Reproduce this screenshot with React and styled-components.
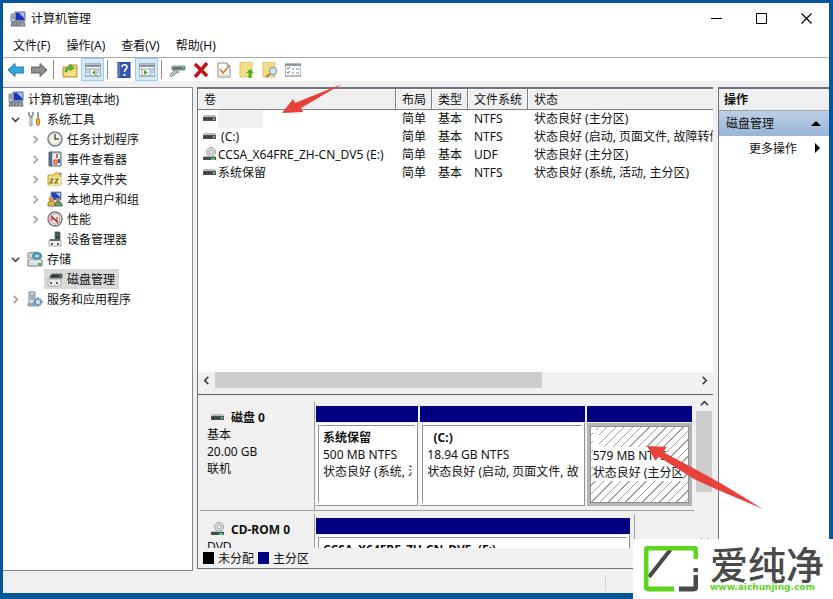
import React from 'react';
import styled, { createGlobalStyle, css } from 'styled-components';

const TREE = [
  { label: '计算机管理(本地)', icon: 'computer', level: 0 },
  { label: '系统工具', icon: 'tools', level: 1, state: 'open' },
  { label: '任务计划程序', icon: 'clock', level: 2, state: 'closed' },
  { label: '事件查看器', icon: 'events', level: 2, state: 'closed' },
  { label: '共享文件夹', icon: 'shared', level: 2, state: 'closed' },
  { label: '本地用户和组', icon: 'users', level: 2, state: 'closed' },
  { label: '性能', icon: 'performance', level: 2, state: 'closed' },
  { label: '设备管理器', icon: 'devices', level: 2 },
  { label: '存储', icon: 'storage', level: 1, state: 'open' },
  { label: '磁盘管理', icon: 'disks', level: 2, selected: true },
  { label: '服务和应用程序', icon: 'services', level: 1, state: 'closed' },
];

const MENUS = ['文件(F)', '操作(A)', '查看(V)', '帮助(H)'];

const TOOLS = [
  ['back', '后退'],
  ['forward', '前进'],
  null,
  ['folderUp', '上一级'],
  ['paneLeft', '显示/隐藏控制台树', true],
  null,
  ['help', '帮助'],
  ['paneRight', '显示/隐藏操作窗格', true],
  null,
  ['connect', '连接'],
  ['remove', '删除'],
  ['check', '属性'],
  ['upload', '打开'],
  ['search', '浏览'],
  ['options', '设置'],
];

const VOLUMES = [
  { name: '', icon: 'drive', fs: 'NTFS', status: '状态良好 (主分区)', masked: true },
  { name: ' (C:)', icon: 'drive', fs: 'NTFS', status: '状态良好 (启动, 页面文件, 故障转储, 主分区)' },
  { name: 'CCSA_X64FRE_ZH-CN_DV5 (E:)', icon: 'disc', fs: 'UDF', status: '状态良好 (主分区)' },
  { name: '系统保留', icon: 'drive', fs: 'NTFS', status: '状态良好 (系统, 活动, 主分区)' },
];

const DISKS = [
  {
    name: '磁盘 0',
    icon: 'drive',
    lines: ['基本', '20.00 GB', '联机'],
    parts: [
      { name: '系统保留', size: '500 MB NTFS', status: '状态良好 (系统, 活动, 主分区)', grow: 102 },
      { name: '  (C:)', size: '18.94 GB NTFS', status: '状态良好 (启动, 页面文件, 故障转储)', grow: 164 },
      { name: '  ', size: '579 MB NTFS', status: '状态良好 (主分区', grow: 105, selected: true },
    ],
  },
  {
    name: 'CD-ROM 0',
    icon: 'disc',
    short: true,
    lines: ['DVD'],
    parts: [{ name: 'CCSA_X64FRE_ZH-CN_DV5  (E:)', grow: 1 }],
  },
];

const DRAWINGS = {
  computer: (
    <>
      <path d="M5 1h10v9H5z" fill="#9aa7c4" stroke="#66708c" />
      <path d="M6 2h8v7H6z" fill="#1d35b8" />
      <path d="M9 2h5v5z" fill="#a9c2f7" />
      <path d="M1 3h4v8H1z" fill="#c9ced8" stroke="#7d8494" />
      <path d="M2 5h2M2 7h2" stroke="#4a5a7c" />
      <path d="M2 11h12l1 4H1z" fill="#a9aebb" stroke="#596274" />
      <path d="M3 13h9" stroke="#414b62" strokeDasharray="2 1" />
    </>
  ),
  tools: (
    <>
      <path d="M4 6v9" stroke="#8c9298" strokeWidth="3" />
      <path d="M4 6v8" stroke="#e7e9eb" />
      <path d="M2 1v3l2 2 2-2V1" fill="none" stroke="#858b91" strokeWidth="1.6" />
      <path d="M11 1v7" stroke="#7c858e" strokeWidth="1.6" />
      <path d="M9.5 8h3v5l-1.5 2-1.5-2z" fill="#f4b13a" stroke="#c07c16" />
    </>
  ),
  clock: (
    <>
      <circle cx="8" cy="8" r="7" fill="#dfe4e8" stroke="#7e868d" strokeWidth="1.6" />
      <circle cx="8" cy="8" r="5" fill="#f7f3df" />
      <path d="M8 3v5h4" fill="none" stroke="#47525c" strokeWidth="1.4" />
    </>
  ),
  events: (
    <>
      <path d="M2 1h12v14H2z" fill="#b9c6dc" stroke="#5a6d92" />
      <path d="M2 1h3v14H2z" fill="#54688f" />
      <path d="M6 3h7v11H6z" fill="#f5f0dc" />
      <path d="M10 3v4" stroke="#d63030" strokeWidth="1.5" />
      <path d="M7 9h3v4H7z" fill="#f3c546" stroke="#d63030" />
      <path d="M11 8h2v4h-2z" fill="#3156b8" />
    </>
  ),
  shared: (
    <>
      <path d="M1 4h6l1-2h6v12H1z" fill="#f3d36b" stroke="#c59c32" />
      <path d="M2 6h12v8H2z" fill="#fae79d" />
      <path d="M3 8h3l-3 4h3M8 8h3l-3 4h3" fill="none" stroke="#63712e" strokeWidth="1.2" />
      <path d="M12 2h2v2h-2z" fill="#5aa1d8" />
    </>
  ),
  users: (
    <>
      <path d="M4 1h10v8H4z" fill="#2444b8" stroke="#8793ae" />
      <path d="M9 2h4v4z" fill="#b6c9f7" />
      <circle cx="4" cy="8" r="2.5" fill="#d99b58" />
      <path d="M1 15v-3l2-2h3l2 2v3z" fill="#e2bd3f" stroke="#9b7b24" />
      <circle cx="11" cy="9" r="2.2" fill="#c48657" />
      <path d="M8 15v-3l2-1h3l2 2v2z" fill="#6b9f72" stroke="#466f52" />
    </>
  ),
  performance: (
    <>
      <circle cx="8" cy="8" r="7" fill="#f8f3f1" stroke="#74777b" strokeWidth="1.4" />
      <circle cx="8" cy="8" r="5" fill="#fff" stroke="#d08a83" />
      <path d="M5 10V6l5 5V6" fill="none" stroke="#b52520" strokeWidth="1.2" />
      <path d="M4 4l8 8" stroke="#c33b35" />
    </>
  ),
  devices: (
    <>
      <path d="M8 1h5v8H8z" fill="#39413f" stroke="#737b79" />
      <path d="M10 3h1v2h-1z" fill="#52c772" />
      <path d="M2 9h12v6H2z" fill="#eceeef" stroke="#a1a5a8" />
      <path d="M3 8h10v2H3z" fill="#636b6d" />
      <path d="M5 12v2M11 12v2" stroke="#333" strokeWidth="1.5" />
    </>
  ),
  storage: (
    <>
      <path d="M1 2l9-1 4 2v4H1z" fill="#d3dade" stroke="#7d888f" />
      <ellipse cx="10" cy="5" rx="4.5" ry="3" fill="#4da9c7" stroke="#397e9b" />
      <ellipse cx="10" cy="5" rx="1.5" ry="1" fill="#fff" />
      <path d="M1 9h14v6H1z" fill="#dce1e3" stroke="#707b80" />
      <path d="M2 10h12" stroke="#fff" />
      <path d="M11 13h3" stroke="#35af4a" strokeWidth="2" />
    </>
  ),
  disks: (
    <>
      <path d="M1 8h13v7H1z" fill="#e9eaea" stroke="#abaeae" />
      <path d="M3 5l2-2h10v4H3z" fill="#333a39" stroke="#737b79" />
      <path d="M12 5h2" stroke="#62c776" />
      <path d="M4 11v2M10 11v2" stroke="#353535" strokeWidth="1.5" />
    </>
  ),
  services: (
    <>
      <path d="M2 1h6v12H2z" fill="#d8e0e6" stroke="#768a98" />
      <path d="M3 4h4M3 6h4M3 8h4" stroke="#688397" />
      <path d="M1 13h8v2H1z" fill="#aebfca" stroke="#7c8f9b" />
      <circle cx="11" cy="11" r="3" fill="#cfe1ef" stroke="#6c96b5" strokeWidth="1.6" />
      <path d="M11 6v2M11 14v2M6 11h2M14 11h2M8 8l1 1M13 13l1 1M14 8l-1 1M8 14l1-1" stroke="#6c96b5" strokeWidth="1.6" />
    </>
  ),
  drive: (
    <>
      <path d="M3 4h11l1 2H2z" fill="#b8bcbb" />
      <path d="M2 6h13v4H2z" fill="#4b5351" />
      <path d="M3 8h7" stroke="#252b29" strokeDasharray="3 1" />
      <path d="M12 8h2" stroke="#4acb6c" strokeWidth="2" />
    </>
  ),
  disc: (
    <>
      <circle cx="10" cy="5" r="4.5" fill="#dcddde" stroke="#a0a3a5" />
      <circle cx="10" cy="5" r="2" fill="#f8f8f8" stroke="#9da0a2" />
      <path d="M3 9h11l1 1H2z" fill="#b6bab8" />
      <path d="M2 10h13v3H2z" fill="#46504b" />
      <path d="M10 12h4" stroke="#4acb6c" strokeWidth="2" />
    </>
  ),
  back: <path d="M0 8l7-6.5V5h9v6H7v3.5z" fill="#32a7df" stroke="#287ca9" />,
  forward: <path d="M16 8L9 1.5V5H0v6h9v3.5z" fill="#8b8f92" stroke="#5f6366" />,
  folderUp: (
    <>
      <path d="M1 5h5l1-2h8v12H1z" fill="#edcf68" stroke="#b99132" />
      <path d="M2 8h12v6H2z" fill="#f7dc86" />
      <path d="M3 10c0-4 2-5 5-5V2l4 4-4 3V7C6 7 5 8 5 10z" fill="#52b43b" stroke="#32892a" strokeWidth=".5" />
    </>
  ),
  paneLeft: (
    <>
      <path d="M0 2h16v12H0z" fill="#fff" stroke="#747f89" />
      <path d="M0 4h16" stroke="#8795a2" strokeWidth="2" />
      <path d="M0 7h16M5 7v7M11 7v7" stroke="#8b98a4" />
      <path d="M1 9h3M1 11h3M12 9h3M12 11h3" stroke="#7ba4c4" />
      <path d="M10 8v5l-3-2.5z" fill="#48a52e" />
    </>
  ),
  paneRight: (
    <>
      <path d="M0 2h16v12H0z" fill="#fff" stroke="#747f89" />
      <path d="M0 4h16" stroke="#8795a2" strokeWidth="2" />
      <path d="M0 7h16M3 7v7M11 7v7" stroke="#8b98a4" />
      <path d="M12 9h3M12 11h3" stroke="#7ba4c4" />
      <path d="M5 8v5l4-2.5z" fill="#48a52e" />
    </>
  ),
  help: (
    <>
      <path d="M2 0h12v16H2z" fill="#3459b7" stroke="#213f8d" />
      <path d="M3 1v14" stroke="#8095cf" />
      <path d="M6 5c0-3 5-3 5 0 0 2-2.5 2-2.5 5" fill="none" stroke="#fff" strokeWidth="1.6" />
      <path d="M7.5 12h2v2h-2z" fill="#fff" />
    </>
  ),
  connect: (
    <>
      <path d="M2 4h13v4H2z" fill="#65716f" stroke="#8b9492" />
      <path d="M2 4h13" stroke="#c1c9c8" />
      <path d="M12 6h2" stroke="#45c75a" strokeWidth="2" />
      <path d="M0 13l5-5 4 2-3 1-5 4z" fill="#b7c8d5" stroke="#708b9e" />
    </>
  ),
  remove: <path d="M2 2l12 12M14 1L2 15" stroke="#bf161b" strokeWidth="3.5" />,
  check: (
    <>
      <path d="M2 1h9l3 3v11H2z" fill="#fff" stroke="#8c8c8c" />
      <path d="M11 1v3h3" fill="none" stroke="#a8a8a8" />
      <path d="M4 7l3 4 6-7" fill="none" stroke="#d5713b" strokeWidth="1.5" />
      <path d="M4 13h8" stroke="#bbb" strokeDasharray="2 1" />
    </>
  ),
  upload: (
    <>
      <path d="M1 0h12v15H1z" fill="#f5dd85" stroke="#dbc36e" />
      <path d="M11 7l4 4h-2.5v5h-3v-5H7z" fill="#4dae30" />
    </>
  ),
  search: (
    <>
      <path d="M1 0h12v15H1z" fill="#f5dd85" stroke="#dbc36e" />
      <circle cx="11" cy="9" r="3.5" fill="#d7eaf4" stroke="#8fa3b3" strokeWidth="1.4" />
      <path d="M8 12l-4 3" stroke="#a37a43" strokeWidth="2" />
    </>
  ),
  options: (
    <>
      <path d="M0 2h16v12H0z" fill="#fff" stroke="#707983" />
      <path d="M0 3h16" stroke="#8d98a4" strokeWidth="2" />
      <path d="M2 6l1 1 2-2M2 10l1 1 2-2" fill="none" stroke="#3575bd" />
      <path d="M7 7h2M7 11h2M11 7h3M11 11h3" stroke="#7c8791" />
    </>
  ),
};

function Icon({ name }) {
  return (
    <IconSvg viewBox="0 0 16 16" aria-hidden="true">
      {DRAWINGS[name]}
    </IconSvg>
  );
}

function Chevron({ dir }) {
  const points = {
    down: '1,3 5,7 9,3',
    up: '1,7 5,3 9,7',
    left: '7,1 3,5 7,9',
    right: '3,1 7,5 3,9',
  };
  return (
    <ChevronSvg viewBox="0 0 10 10" aria-hidden="true">
      <polyline points={points[dir]} fill="none" stroke="currentColor" strokeWidth="1.8" />
    </ChevronSvg>
  );
}

function ConsoleTree() {
  return (
    <Tree aria-label="控制台树">
      {TREE.map(item => (
        <TreeRow key={item.label} $level={item.level}>
          {item.level > 0 && (
            <Toggle $open={item.state === 'open'} disabled={!item.state} aria-label={item.label}>
              {item.state && <Chevron dir={item.state === 'open' ? 'down' : 'right'} />}
            </Toggle>
          )}
          <TreeItem href="#" $selected={item.selected}>
            <Icon name={item.icon} />
            {item.label}
          </TreeItem>
        </TreeRow>
      ))}
    </Tree>
  );
}

function VolumeList() {
  return (
    <ListPane>
      <TableArea>
        <Table>
          <colgroup>
            <Col $width={198} />
            <Col $width={36} />
            <Col $width={36} />
            <Col $width={60} />
            <col />
          </colgroup>
          <thead>
            <tr>
              <Th>卷</Th>
              <Th>布局</Th>
              <Th>类型</Th>
              <Th>文件系统</Th>
              <Th>状态</Th>
            </tr>
          </thead>
          <tbody>
            {VOLUMES.map(v => (
              <tr key={v.name}>
                <Td $first>
                  <VolumeName>
                    <Icon name={v.icon} />
                    {v.masked ? <Mask /> : v.name}
                  </VolumeName>
                </Td>
                <Td>简单</Td>
                <Td>基本</Td>
                <Td>{v.fs}</Td>
                <Td>{v.status}</Td>
              </tr>
            ))}
          </tbody>
        </Table>
      </TableArea>
      <ScrollBar>
        <ScrollBtn aria-label="向左滚动">
          <Chevron dir="left" />
        </ScrollBtn>
        <Track>
          <Thumb />
        </Track>
        <ScrollBtn aria-label="向右滚动">
          <Chevron dir="right" />
        </ScrollBtn>
      </ScrollBar>
    </ListPane>
  );
}

function DiskView() {
  return (
    <DiskPane>
      <DiskRows>
        {DISKS.map(disk => (
          <Disk key={disk.name}>
            <DiskLabel>
              <DiskTitle>
                <Icon name={disk.icon} />
                {disk.name}
              </DiskTitle>
              {disk.lines.map(line => (
                <div key={line}>{line}</div>
              ))}
            </DiskLabel>
            <Parts $short={disk.short}>
              {disk.parts.map(part => (
                <Part key={part.name} $grow={part.grow}>
                  <PartBar />
                  <PartBody $selected={part.selected}>
                    <PartInner $selected={part.selected}>
                      <PartLine $bold>{part.name}</PartLine>
                      {part.size && <PartLine>{part.size}</PartLine>}
                      {part.status && <PartLine>{part.status}</PartLine>}
                    </PartInner>
                  </PartBody>
                </Part>
              ))}
            </Parts>
          </Disk>
        ))}
      </DiskRows>
      <ScrollBar $vertical>
        <ScrollBtn aria-label="向上滚动">
          <Chevron dir="up" />
        </ScrollBtn>
        <Track>
          <Thumb $vertical />
        </Track>
        <ScrollBtn aria-label="向下滚动">
          <Chevron dir="down" />
        </ScrollBtn>
      </ScrollBar>
    </DiskPane>
  );
}

function App() {
  return (
    <Desktop>
      <GlobalStyle />
      <Window>
        <TitleBar>
          <Icon name="computer" />
          <Title>计算机管理</Title>
          <WindowBtn aria-label="最小化">
            <svg width="11" height="11">
              <path d="M0 5.5h11" stroke="#000" />
            </svg>
          </WindowBtn>
          <WindowBtn aria-label="最大化">
            <svg width="11" height="11">
              <path d="M.5.5h10v10H.5z" fill="none" stroke="#000" />
            </svg>
          </WindowBtn>
          <WindowBtn aria-label="关闭">
            <svg width="11" height="11">
              <path d="M.5.5l10 10M10.5.5l-10 10" stroke="#000" strokeWidth="1.2" />
            </svg>
          </WindowBtn>
        </TitleBar>
        <MenuBar>
          {MENUS.map(menu => (
            <MenuBtn key={menu}>{menu}</MenuBtn>
          ))}
        </MenuBar>
        <ToolBar>
          {TOOLS.map((tool, idx) =>
            tool ? (
              <ToolBtn key={tool[0]} aria-label={tool[1]} $active={tool[2]}>
                <Icon name={tool[0]} />
              </ToolBtn>
            ) : (
              <Separator key={idx} />
            ),
          )}
        </ToolBar>
        <Workspace>
          <ConsoleTree />
          <Center>
            <VolumeList />
            <DiskView />
            <Legend>
              <Swatch $color="#000" />
              未分配
              <Swatch $color="#000080" />
              主分区
            </Legend>
          </Center>
          <Actions>
            <ActionsTitle>操作</ActionsTitle>
            <ActionsGroup>
              磁盘管理
              <svg width="10" height="5">
                <path d="M0 5l5-5 5 5z" />
              </svg>
            </ActionsGroup>
            <ActionsItem>
              更多操作
              <svg width="5" height="10">
                <path d="M0 0l5 5-5 5z" />
              </svg>
            </ActionsItem>
          </Actions>
        </Workspace>
        <StatusBar>
          <StatusCell />
        </StatusBar>
      </Window>
      <Pointer $x={281} $y={83} width="62" height="32">
        <path d="M1 30L12 16l2 4L61 1 20 25l2 4z" fill="#e8413a" />
      </Pointer>
      <Pointer $x={646} $y={444} width="118" height="66">
        <path d="M1 2L21 3 17 8 49 25 76 40 117 65 72 46 48 35 13 13 9 16z" fill="#e8413a" />
      </Pointer>
      <Watermark>
        <svg width="54" height="46" viewBox="0 0 54 46" aria-hidden="true">
          <path d="M27 3L5 31" stroke="#4a4a4a" strokeWidth="4" />
          <path d="M30 43H5q-3 0-3-3V5q0-3 3-3h44q3 0 3 3v8" fill="none" stroke="#5fd41f" strokeWidth="5" />
          <path d="M35 43h14q3 0 3-3V29M52 22v4" fill="none" stroke="#4a4a4a" strokeWidth="5" />
        </svg>
        <Brand>
          <BrandName>爱纯净</BrandName>
          <BrandUrl href="#">www.aichunjing.com</BrandUrl>
        </Brand>
      </Watermark>
    </Desktop>
  );
}

const GlobalStyle = createGlobalStyle`
  * {
    box-sizing: border-box;
  }
  body {
    margin: 0;
    font-family: 'Noto Sans', 'Noto Sans CJK SC', sans-serif;
    font-size: 12px;
    line-height: 17px;
    color: #111;
  }
  button {
    padding: 0;
    border: 0;
    background: none;
    font: inherit;
    color: inherit;
  }
  a {
    color: inherit;
    text-decoration: none;
  }
`;

const Desktop = styled.div`
  position: relative;
  height: 100vh;
  padding: 3px 4px 6px 3px;
  overflow: hidden;
  background: #04579b;
`;

const Window = styled.div`
  display: flex;
  flex-direction: column;
  height: 100%;
  background: #f0f0f0;
`;

const IconSvg = styled.svg`
  flex: none;
  width: 16px;
  height: 16px;
`;

const ChevronSvg = styled.svg`
  width: 9px;
  height: 9px;
`;

const TitleBar = styled.header`
  display: flex;
  align-items: center;
  gap: 5px;
  height: 31px;
  padding: 0 3px 0 7px;
  background: #fff;
`;

const Title = styled.h1`
  flex: 1;
  margin: 0;
  font-size: 12px;
  font-weight: 400;
`;

const WindowBtn = styled.button`
  display: flex;
  align-items: center;
  justify-content: center;
  width: 40px;
  height: 30px;
`;

const MenuBar = styled.nav`
  display: flex;
  height: 24px;
  padding-left: 2px;
  border-bottom: 1px solid #a8a8a8;
  background: #fff;
`;

const MenuBtn = styled.button`
  padding: 0 8px;
`;

const ToolBar = styled.div`
  display: flex;
  height: 23px;
  padding-left: 1px;
  background: #fff;
`;

const ToolBtn = styled.button`
  display: flex;
  align-items: center;
  justify-content: center;
  width: 23px;
  border: 1px solid ${props => (props.$active ? '#9bcdf0' : 'transparent')};
  background: ${props => (props.$active ? '#d3e9f8' : 'none')};
`;

const Separator = styled.div`
  width: 1px;
  margin: 2px 4px 2px 3px;
  background: #8a8a8a;
`;

const Workspace = styled.main`
  display: flex;
  flex: 1;
  gap: 4px;
  min-height: 0;
  padding-top: 6px;
`;

const Tree = styled.nav`
  flex: 0 0 190px;
  padding-top: 1px;
  border: 1px solid #828790;
  border-left: 0;
  background: #fff;
`;

const TreeRow = styled.div`
  display: flex;
  height: 20px;
  padding-left: ${props => (props.$level === 2 ? 24 : 4)}px;
`;

const Toggle = styled.button`
  display: flex;
  align-items: center;
  justify-content: center;
  width: 17px;
  color: ${props => (props.$open ? '#404040' : '#a0a0a0')};
`;

const TreeItem = styled.a`
  display: flex;
  align-items: center;
  gap: 4px;
  padding: 0 4px 0 3px;
  background: ${props => (props.$selected ? '#d9d9d9' : 'none')};

  ${TreeRow}:first-child & {
    padding-left: 1px;
  }
`;

const Center = styled.section`
  display: flex;
  flex: 1;
  flex-direction: column;
  min-width: 0;
  margin: 0 1px 2px 0;
  border: solid #70747c;
  border-width: 2px 0 1px 1px;
`;

const ListPane = styled.div`
  display: flex;
  flex: 2 1 0;
  flex-direction: column;
  min-height: 0;
  padding-bottom: 6px;
  border-bottom: 1px solid #606060;
`;

const TableArea = styled.div`
  flex: 1;
  overflow: hidden;
  background: #fff;
`;

const Table = styled.table`
  width: 100%;
  table-layout: fixed;
  border-collapse: separate;
  border-spacing: 0;
`;

const Col = styled.col`
  width: ${props => props.$width}px;
`;

const Th = styled.th`
  height: 21px;
  padding: 0 0 0 6px;
  border-right: 1px solid #808080;
  border-bottom: 1px solid #808080;
  box-shadow: inset 1px 1px #fff;
  background: #f0f0f0;
  font-weight: 400;
  text-align: left;
  white-space: nowrap;

  &:last-child {
    border-right: 0;
  }
`;

const Td = styled.td`
  height: 18px;
  padding: 0 0 0 ${props => (props.$first ? 3 : 6)}px;
  overflow: hidden;
  line-height: 18px;
  white-space: nowrap;
`;

const VolumeName = styled.div`
  display: flex;
  align-items: center;
  gap: 1px;
  height: 18px;
  white-space: pre;
`;

const Mask = styled.span`
  width: 45px;
  height: 18px;
  background: #f0f0f0;
`;

const ScrollBar = styled.div`
  display: flex;
  flex: none;
  flex-direction: ${props => (props.$vertical ? 'column' : 'row')};
  background: #f0f0f0;
`;

const ScrollBtn = styled.button`
  display: flex;
  align-items: center;
  justify-content: center;
  width: 17px;
  height: 16px;
  color: #404040;
`;

const Track = styled.div`
  flex: 1;
`;

const Thumb = styled.div`
  background: #cdcdcd;
  ${props =>
    props.$vertical
      ? css`
          width: 16px;
          height: 67%;
        `
      : css`
          width: 68%;
          height: 16px;
        `}
`;

const DiskPane = styled.div`
  display: flex;
  flex: 1.02 1 0;
  min-height: 0;
  overflow: hidden;
`;

const DiskRows = styled.div`
  display: flex;
  flex: 1;
  flex-direction: column;
  gap: 3px;
  min-width: 0;
  padding: 7px 2px 0 2px;
`;

const Disk = styled.div`
  display: flex;
  flex: none;
  height: 109px;
  border-bottom: 1px solid #a0a0a0;
`;

const DiskLabel = styled.div`
  flex: 0 0 115px;
  padding: 7px 0 0 7px;
  border-right: 1px solid #a0a0a0;
`;

const DiskTitle = styled.div`
  display: flex;
  align-items: center;
  gap: 6px;
  padding-left: 2px;
  font-weight: 700;
`;

const Parts = styled.div`
  display: flex;
  flex: 1;
  gap: 2px;
  min-width: 0;
  margin-right: ${props => (props.$short ? '12%' : '2px')};
  padding: 4px ${props => (props.$short ? '4px' : '0')} 4px 1px;
  border-right: ${props => (props.$short ? '1px solid #a0a0a0' : '0')};
`;

const Part = styled.div`
  display: flex;
  flex: ${props => props.$grow} 1 0;
  flex-direction: column;
  min-width: 0;
`;

const PartBar = styled.div`
  height: 16px;
  margin-bottom: 1px;
  background: #000080;
`;

const PartBody = styled.div`
  flex: 1;
  min-height: 0;
  padding: ${props => (props.$selected ? '3px' : '2px')};
  background: ${props => (props.$selected ? '#b4b4b4' : '#fff')};
  border: solid #909090;
  border-width: ${props => (props.$selected ? '0' : '0 1px 1px 0')};
`;

const PartInner = styled.div`
  height: 100%;
  padding: 3px 2px 0 ${props => (props.$selected ? '2px' : '4px')};
  overflow: hidden;
  border: 1px solid #909090;
  border-right-color: ${props => (props.$selected ? '#909090' : '#fff')};
  border-bottom-color: ${props => (props.$selected ? '#909090' : '#fff')};
  background: ${props =>
    props.$selected
      ? 'repeating-linear-gradient(135deg, #fff 0, #fff 5px, #a0a0a0 5px, #a0a0a0 6px)'
      : '#fff'};
`;

const PartLine = styled.div`
  width: fit-content;
  max-width: 100%;
  overflow: hidden;
  background: #fff;
  font-weight: ${props => (props.$bold ? 700 : 400)};
  white-space: pre;
`;

const Legend = styled.footer`
  display: flex;
  align-items: center;
  gap: 4px;
  height: 20px;
  padding-left: 5px;
`;

const Swatch = styled.span`
  width: 11px;
  height: 12px;
  background: ${props => props.$color};
`;

const Actions = styled.aside`
  flex: 0 0 111px;
  margin-bottom: 1px;
  border: solid #70747c;
  border-width: 2px 0 1px 1px;
  background: #fff;
`;

const ActionsTitle = styled.h2`
  margin: 0;
  padding: 2px 5px;
  border-bottom: 1px solid #a0a0a0;
  background: #f0f0f0;
  font-size: 12px;
  font-weight: 700;
`;

const ActionsGroup = styled.button`
  display: flex;
  align-items: center;
  justify-content: space-between;
  width: 100%;
  height: 25px;
  padding: 0 8px 0 7px;
  background: linear-gradient(#bccfe6, #98b4d6);
`;

const ActionsItem = styled(ActionsGroup)`
  height: 24px;
  padding: 0 9px 0 30px;
  background: none;
`;

const StatusBar = styled.div`
  flex: none;
  height: 22px;
  padding: 3px 0;
`;

const StatusCell = styled.div`
  width: 73%;
  height: 100%;
  border-right: 1px solid #d0d0d0;
`;

const Pointer = styled.svg`
  position: absolute;
  top: ${props => props.$y}px;
  left: ${props => props.$x}px;
  pointer-events: none;
`;

const Watermark = styled.div`
  position: absolute;
  right: 0;
  bottom: 0;
  display: flex;
  align-items: center;
  gap: 12px;
  width: 200px;
  height: 60px;
  padding-left: 11px;
  background: #fff;
`;

const Brand = styled.div`
  display: flex;
  flex-direction: column;
`;

const BrandName = styled.span`
  font-family: 'Noto Sans CJK SC', sans-serif;
  font-size: 38px;
  font-weight: 500;
  line-height: 36px;
  color: #4a4a4a;
`;

const BrandUrl = styled.a`
  font-family: 'DejaVu Sans', sans-serif;
  font-size: 9px;
  font-weight: 700;
  line-height: 12px;
  color: #5fd41f;
`;

export default App;
